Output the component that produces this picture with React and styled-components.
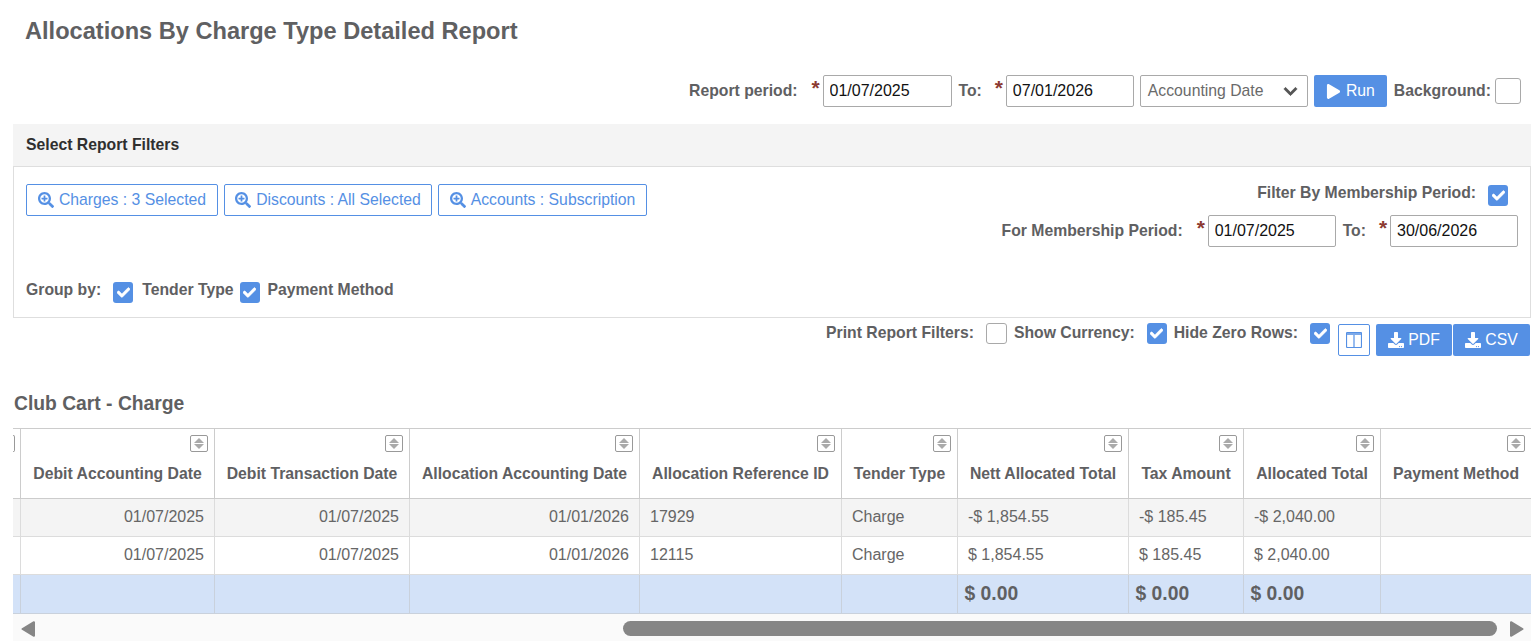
import React from "react";
import styled, { createGlobalStyle } from "styled-components";
import { FaSearchPlus, FaPlay, FaDownload, FaCheck, FaChevronDown } from "react-icons/fa";

const Global = createGlobalStyle`
  html, body { margin: 0; padding: 0; background: #fff; overflow: hidden; }
  * { box-sizing: border-box; }
  body { font-family: "Liberation Sans", Arial, sans-serif; font-size: 16px; color: #5f6062; }
`;

const Page = styled.div`
  width: 1540px;
  height: 643px;
  padding: 0 9px 0 13px;
  overflow: hidden;
`;
const Title = styled.h1`
  margin: 0;
  padding: 18px 0 0 12px;
  height: 75px;
  font-size: 23.6px;
  line-height: 26px;
  font-weight: 700;
  color: #5f6062;
`;
const PeriodRow = styled.div`
  display: flex;
  align-items: center;
  justify-content: flex-end;
  height: 32px;
  padding-right: 10px;
`;
const Label = styled.label`
  font-weight: 700;
  font-size: 15.75px;
  line-height: 18px;
  color: #5f6062;
  white-space: nowrap;
  margin-left: ${(p) => p.$ml || 0}px;
  margin-right: ${(p) => p.$mr || 0}px;
  margin-top: ${(p) => p.$mt || 0}px;
`;
const Star = styled.span`
  color: #8c3a32;
  font-size: 21px;
  font-weight: 700;
  line-height: 20px;
  height: 24px;
  margin-right: 3px;
  align-self: flex-start;
  padding-top: 3px;
  width: 8px;
  overflow: visible;
`;
const DateInput = styled.input`
  width: ${(p) => p.$w || 129}px;
  height: 32px;
  border: 1px solid #a9a9a9;
  border-radius: 2px;
  padding: 0 6px;
  font: 16px "Liberation Sans", Arial, sans-serif;
  color: #111;
  background: #fff;
  outline: none;
`;
const SelectBox = styled.div`
  display: flex;
  align-items: center;
  justify-content: space-between;
  width: 168px;
  height: 32px;
  margin-left: 6px;
  padding: 0 9px 0 7px;
  border: 1px solid #a9a9a9;
  border-radius: 2px;
  font-size: 15.75px;
  color: #6a6a6a;
  svg { color: #555; font-size: 15px; stroke: currentColor; stroke-width: 24; }
`;
const PrimaryButton = styled.button`
  display: inline-flex;
  align-items: center;
  justify-content: center;
  gap: ${(p) => p.$gap ?? 5}px;
  width: ${(p) => p.$w}px;
  height: 32px;
  margin-left: ${(p) => p.$ml || 0}px;
  background: #5590e4;
  color: #fff;
  border: 0;
  border-radius: 2px;
  padding: 0;
  font: 15.75px "Liberation Sans", Arial, sans-serif;
`;
const Checkbox = styled.span`
  display: inline-flex;
  align-items: center;
  justify-content: center;
  flex: none;
  width: ${(p) => p.$w || 20}px;
  height: ${(p) => p.$h || 21}px;
  margin-left: ${(p) => p.$ml || 0}px;
  margin-right: ${(p) => p.$mr || 0}px;
  border-radius: 3px;
  background: ${(p) => (p.$on ? "#5590e4" : "#fff")};
  border: ${(p) => (p.$on ? "0" : "1px solid #a9a9a9")};
  color: #fff;
  font-size: 13px;
  svg { stroke: currentColor; stroke-width: 24; }
`;
const FilterHeader = styled.div`
  margin-top: 17px;
  height: 42px;
  background: #f4f4f4;
  padding: 12px 13px 0;
  font-size: 15.75px;
  line-height: 17px;
  font-weight: 700;
  color: #2f2f2f;
`;
const Panel = styled.div`
  display: flex;
  justify-content: space-between;
  height: 152px;
  border: 1px solid #dedede;
`;
const PanelLeft = styled.div`
  display: flex;
  flex-direction: column;
  justify-content: space-between;
  padding: 17px 0 15px 12px;
`;
const ButtonRow = styled.div`
  display: flex;
  gap: 6px;
`;
const OutlineButton = styled.button`
  display: inline-flex;
  align-items: center;
  justify-content: center;
  gap: 5px;
  width: ${(p) => p.$w}px;
  height: 32px;
  background: #fff;
  color: #5590e4;
  border: 1px solid #5590e4;
  border-radius: 2px;
  padding: 0;
  font: 15.75px "Liberation Sans", Arial, sans-serif;
  svg { font-size: 16px; }
`;
const GroupRow = styled.div`
  display: flex;
  align-items: flex-start;
  height: 20px;
`;
const PanelRight = styled.div`
  display: flex;
  flex-direction: column;
  align-items: flex-end;
  padding: 18px 12px 0 0;
`;
const FilterRow = styled.div`
  display: flex;
  align-items: flex-start;
  height: 30px;
  padding-right: 10px;
`;
const MembershipRow = styled.div`
  display: flex;
  align-items: center;
  height: 32px;
`;
const ActionRow = styled.div`
  display: flex;
  justify-content: flex-end;
  align-items: flex-start;
  height: 74px;
  padding: 5px 1px 0 0;
`;
const ColumnsButton = styled.button`
  display: inline-flex;
  align-items: center;
  justify-content: center;
  width: 32px;
  height: 32px;
  margin: 1px 0 0 8px;
  padding: 0;
  background: #fff;
  border: 1px solid #5590e4;
  border-radius: 2px;
`;
const ExportGroup = styled.div`
  display: flex;
  gap: 1px;
  margin: 1px 0 0 6px;
`;
const Heading = styled.h2`
  margin: 0;
  padding: 1px 0 0 1px;
  height: 36px;
  font-size: 19.3px;
  line-height: 22px;
  font-weight: 700;
  color: #5f6062;
`;
const COLS = "8px 194px 195px 230px 202px 116px 171px 115px 137px 150px";
const Row = styled.div`
  display: grid;
  grid-template-columns: ${COLS};
  height: ${(p) => p.$h}px;
  background: ${(p) => p.$bg || "#fff"};
  border-bottom: 1px solid ${(p) => p.$line || "#dcdcdc"};
`;
const HeaderRow = styled(Row)`
  border-top: 1px solid #ccc;
  border-bottom: 1px solid #ccc;
`;
const HeadCell = styled.div`
  display: flex;
  flex-direction: column;
  align-items: flex-end;
  padding: 6px 6px 0;
  border-right: 1px solid #ccc;
  overflow: hidden;
  &:last-child { border-right: 0; }
`;
const HeadText = styled.div`
  width: 100%;
  margin-top: 13px;
  font-size: 15.75px;
  line-height: 18px;
  font-weight: 700;
  color: #5f6062;
  white-space: nowrap;
  text-align: center;
`;
const SortBox = styled.span`
  display: inline-flex;
  flex-direction: column;
  align-items: center;
  justify-content: center;
  gap: 1px;
  width: 18px;
  height: 17px;
  border: 1px solid #999;
  border-radius: 2px;
  background: #fff;
`;
const Tri = styled.i`
  width: 0;
  height: 0;
  border-left: 5px solid transparent;
  border-right: 5px solid transparent;
  ${(p) => (p.$up ? "border-bottom: 5px solid #aaa;" : "border-top: 5px solid #aaa;")}
`;
const StubCell = styled.div`
  border-right: 1px solid ${(p) => p.$line || "#dcdcdc"};
`;
const StubHead = styled.div`
  padding-top: 6px;
  border-right: 1px solid #ccc;
`;
const StubSort = styled.span`
  display: block;
  width: 2px;
  height: 17px;
  border: 1px solid #999;
  border-left: 0;
  border-radius: 0 2px 2px 0;
`;
const Cell = styled.div`
  display: flex;
  align-items: center;
  justify-content: ${(p) => (p.$right ? "flex-end" : "flex-start")};
  padding: 0 ${(p) => (p.$right ? 10 : 7)}px 2px ${(p) => (p.$right ? 7 : 10)}px;
  border-right: 1px solid #dcdcdc;
  font-size: 16px;
  color: #666;
  &:last-child { border-right: 0; }
`;
const TotalCell = styled(Cell)`
  padding-left: 6.5px;
  padding-bottom: 0;
  border-right-color: #c9d1dc;
  font-size: 19.3px;
  font-weight: 700;
  color: #5f6062;
`;
const ScrollTrack = styled.div`
  display: flex;
  align-items: center;
  height: 27px;
  background: #fafafa;
  padding: 2px 7px 0 8px;
`;
const ScrollThumb = styled.div`
  width: 874px;
  height: 15px;
  margin-left: auto;
  margin-right: 13px;
  border-radius: 8px;
  background: #868686;
`;
const ColumnsIcon = () => (
  <svg width="16" height="16" viewBox="0 0 16 16" fill="none" stroke="#5590e4">
    <rect x="0.5" y="0.5" width="15" height="15" rx="1" strokeWidth="1.2" />
    <path d="M8 1v14" strokeWidth="1.2" />
    <path d="M1 2h14" strokeWidth="2" stroke="#7da9e8" />
  </svg>
);

const check = <FaCheck />;
const Sort = () => (
  <SortBox>
    <Tri $up />
    <Tri />
  </SortBox>
);
const columns = [
  "Debit Accounting Date",
  "Debit Transaction Date",
  "Allocation Accounting Date",
  "Allocation Reference ID",
  "Tender Type",
  "Nett Allocated Total",
  "Tax Amount",
  "Allocated Total",
  "Payment Method",
];
const rows = [
  { bg: "#f4f4f4", d: "01/01/2026", id: "17929", n: "-$ 1,854.55", t: "-$ 185.45", a: "-$ 2,040.00" },
  { bg: "#fff", d: "01/01/2026", id: "12115", n: "$ 1,854.55", t: "$ 185.45", a: "$ 2,040.00" },
];

export default function App() {
  return (
    <Page>
      <Global />
      <Title>Allocations By Charge Type Detailed Report</Title>
      <PeriodRow>
        <Label $mr={14}>Report period:</Label>
        <Star>*</Star>
        <DateInput defaultValue="01/07/2025" />
        <Label $ml={7} $mr={13}>To:</Label>
        <Star>*</Star>
        <DateInput $w={128} defaultValue="07/01/2026" />
        <SelectBox>
          Accounting Date
          <FaChevronDown />
        </SelectBox>
        <PrimaryButton $w={73} $ml={6} $gap={5}>
          <FaPlay size={15} />
          Run
        </PrimaryButton>
        <Label $ml={7} $mr={4}>Background:</Label>
        <Checkbox $w={26} $h={26} />
      </PeriodRow>
      <FilterHeader>Select Report Filters</FilterHeader>
      <Panel>
        <PanelLeft>
          <ButtonRow>
            <OutlineButton $w={192}><FaSearchPlus />Charges : 3 Selected</OutlineButton>
            <OutlineButton $w={208}><FaSearchPlus />Discounts : All Selected</OutlineButton>
            <OutlineButton $w={209}><FaSearchPlus />Accounts : Subscription</OutlineButton>
          </ButtonRow>
          <GroupRow>
            <Label $mr={12} $mt={-1}>Group by:</Label>
            <Checkbox $on $mr={9}>{check}</Checkbox>
            <Label $mr={6} $mt={-1}>Tender Type</Label>
            <Checkbox $on $mr={8}>{check}</Checkbox>
            <Label $mt={-1}>Payment Method</Label>
          </GroupRow>
        </PanelLeft>
        <PanelRight>
          <FilterRow>
            <Label $mr={12} $mt={-1}>Filter By Membership Period:</Label>
            <Checkbox $on>{check}</Checkbox>
          </FilterRow>
          <MembershipRow>
            <Label $mr={14}>For Membership Period:</Label>
            <Star>*</Star>
            <DateInput $w={128} defaultValue="01/07/2025" />
            <Label $ml={7} $mr={13}>To:</Label>
            <Star>*</Star>
            <DateInput $w={128} defaultValue="30/06/2026" />
          </MembershipRow>
        </PanelRight>
      </Panel>
      <ActionRow>
        <Label $mr={12} $mt={1}>Print Report Filters:</Label>
        <Checkbox $w={21} />
        <Label $ml={7} $mr={12} $mt={1}>Show Currency:</Label>
        <Checkbox $on>{check}</Checkbox>
        <Label $ml={7} $mr={12} $mt={1}>Hide Zero Rows:</Label>
        <Checkbox $on>{check}</Checkbox>
        <ColumnsButton>
          <ColumnsIcon />
        </ColumnsButton>
        <ExportGroup>
          <PrimaryButton $w={76} $gap={4}><FaDownload size={16} />PDF</PrimaryButton>
          <PrimaryButton $w={77} $gap={4}><FaDownload size={16} />CSV</PrimaryButton>
        </ExportGroup>
      </ActionRow>
      <Heading>Club Cart - Charge</Heading>
      <HeaderRow $h={71}>
        <StubHead><StubSort /></StubHead>
        {columns.map((name) => (
          <HeadCell key={name}>
            <Sort />
            <HeadText>{name}</HeadText>
          </HeadCell>
        ))}
      </HeaderRow>
      {rows.map((r) => (
        <Row key={r.id} $h={38} $bg={r.bg}>
          <StubCell />
          <Cell $right>01/07/2025</Cell>
          <Cell $right>01/07/2025</Cell>
          <Cell $right>{r.d}</Cell>
          <Cell>{r.id}</Cell>
          <Cell>Charge</Cell>
          <Cell>{r.n}</Cell>
          <Cell>{r.t}</Cell>
          <Cell>{r.a}</Cell>
          <Cell />
        </Row>
      ))}
      <Row $h={39} $bg="#d3e2f8" $line="#c9d1dc">
        <StubCell $line="#c9d1dc" />
        <TotalCell />
        <TotalCell />
        <TotalCell />
        <TotalCell />
        <TotalCell />
        <TotalCell>$ 0.00</TotalCell>
        <TotalCell>$ 0.00</TotalCell>
        <TotalCell>$ 0.00</TotalCell>
        <TotalCell />
      </Row>
      <ScrollTrack>
        <svg width="14" height="16" viewBox="0 0 14 16"><path d="M1.5 8 L13 1.2 V14.8 Z" fill="#868686" stroke="#868686" strokeWidth="2" strokeLinejoin="round" /></svg>
        <ScrollThumb />
        <svg width="14" height="16" viewBox="0 0 14 16"><path d="M12.5 8 L1 1.2 V14.8 Z" fill="#868686" stroke="#868686" strokeWidth="2" strokeLinejoin="round" /></svg>
      </ScrollTrack>
    </Page>
  );
}
